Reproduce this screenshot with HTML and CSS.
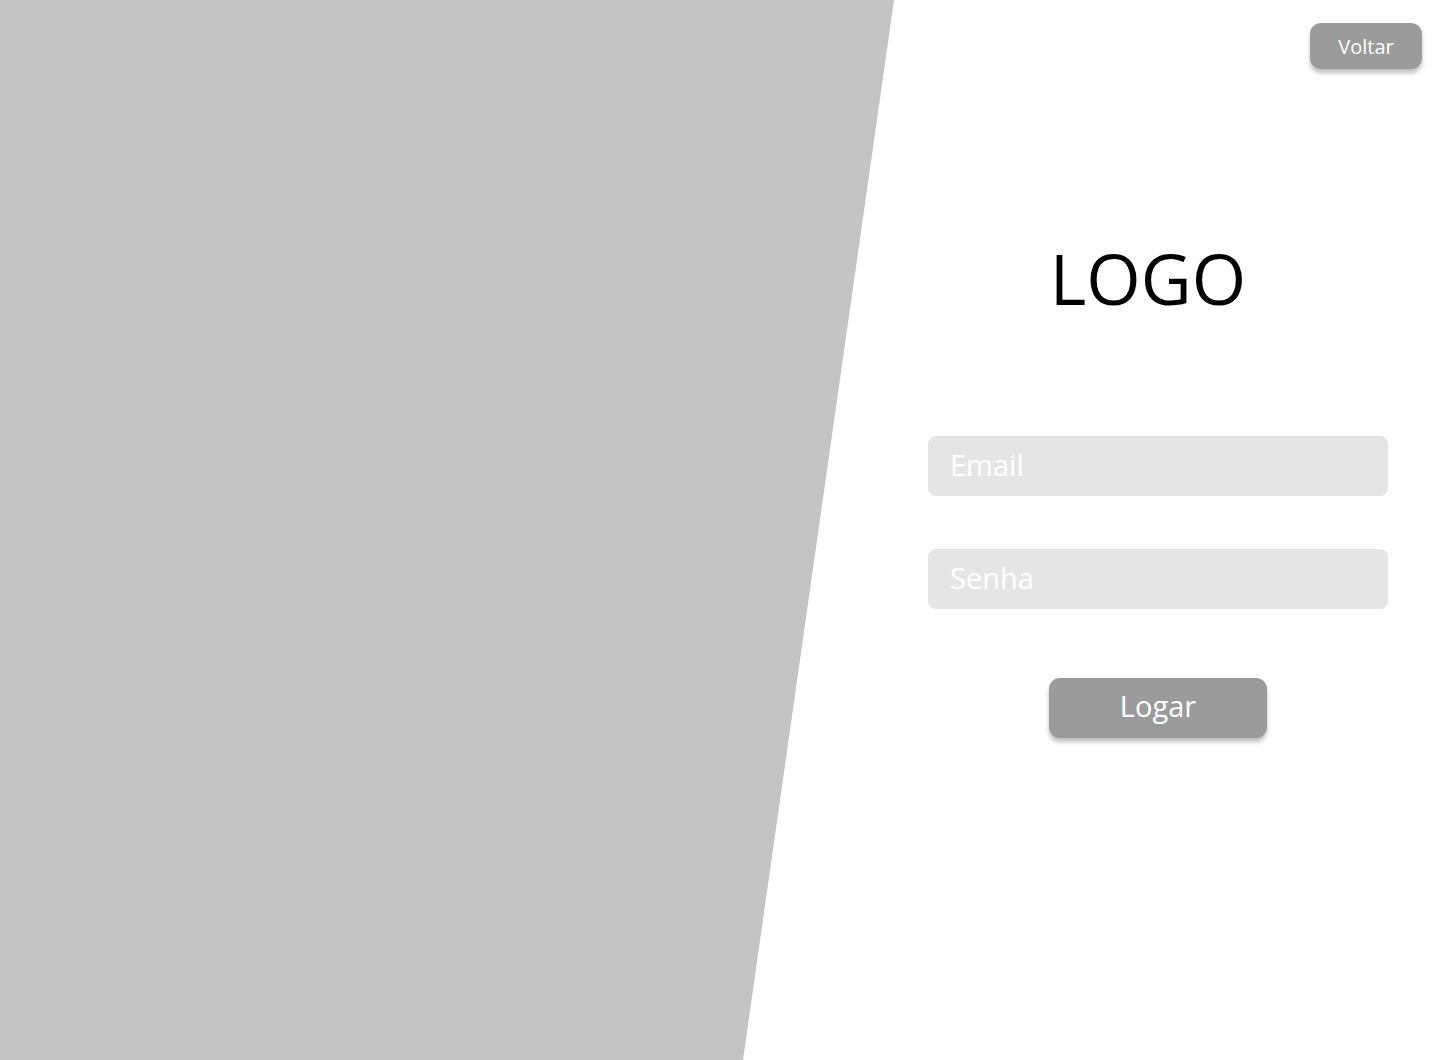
FILE: index.html
```html
<!DOCTYPE html>
<html lang="pt-BR">
<head>
<meta charset="utf-8">
<title>Login</title>
<link rel="stylesheet" href="styles.css">
</head>
<body>
<div class="page">
  <div class="side-art"></div>
  <main class="panel">
    <button class="btn-back" type="button">Voltar</button>
    <div class="form-col">
      <h1 class="logo">LOGO</h1>
      <input class="field field-email" type="email" placeholder="Email">
      <input class="field field-pass" type="password" placeholder="Senha">
      <button class="btn-login" type="button">Logar</button>
    </div>
  </main>
</div>
</body>
</html>
```
FILE: styles.css
```css
* { box-sizing: border-box; }
html, body {
  margin: 0;
  padding: 0;
  background: #ffffff;
  font-family: "Open Sans", "Noto Sans", sans-serif;
}
.page {
  display: flex;
  width: 1440px;
  height: 1060px;
  overflow: hidden;
}
.side-art {
  flex: 0 0 894px;
  height: 1060px;
  background: #c4c4c4;
  clip-path: polygon(0 0, 894px 0, 743px 1060px, 0 1060px);
}
.panel {
  flex: 1;
  display: flex;
  flex-direction: column;
}
.btn-back {
  align-self: flex-end;
  margin: 23px 18px 0 0;
  width: 112px;
  height: 46px;
  border: none;
  border-radius: 11px;
  background: #9b9b9b;
  color: #ffffff;
  font-family: "Open Sans", sans-serif;
  font-size: 20px;
  box-shadow: 0 4px 4px rgba(0,0,0,0.25);
  padding: 0;
}
.form-col {
  width: 460px;
  margin-left: 34px;
  display: flex;
  flex-direction: column;
  align-items: center;
}
.logo {
  margin: 160px 0 0 0;
  padding-right: 20px;
  font-weight: 400;
  font-size: 70px;
  line-height: 98px;
  color: #000;
  letter-spacing: 0;
}
.field {
  width: 460px;
  height: 60px;
  border: none;
  border-radius: 8px;
  background: #e5e5e5;
  padding: 0 20px 4px 22px;
  font-family: "Open Sans", sans-serif;
  font-size: 29px;
  color: #555;
  outline: none;
}
.field::placeholder { color: #ffffff; opacity: 1; }
.field-email { margin-top: 109px; }
.field-pass { margin-top: 53px; }
.btn-login {
  margin-top: 69px;
  width: 218px;
  height: 60px;
  border: none;
  border-radius: 11px;
  background: #9b9b9b;
  color: #ffffff;
  font-family: "Open Sans", sans-serif;
  font-size: 29px;
  box-shadow: 0 4px 4px rgba(0,0,0,0.25);
  padding: 0 0 6px 0;
}
```
